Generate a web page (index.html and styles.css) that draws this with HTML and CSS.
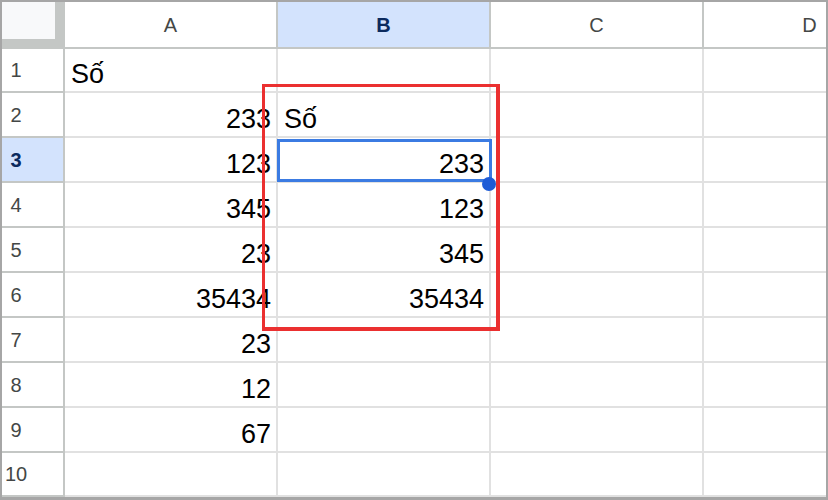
FILE: index.html
```html
<!DOCTYPE html>
<html lang="vi">
<head>
  <meta charset="UTF-8" />
  <title>Bảng tính</title>
  <link rel="stylesheet" href="styles.css">
</head>
<body>
  <div class="sheet">
    <div class="grid">
      <!-- En-tête des colonnes -->
      <div class="cell corner"></div>
      <div class="cell col-head">A</div>
      <div class="cell col-head active">B</div>
      <div class="cell col-head">C</div>
      <div class="cell col-head">D</div>

      <div class="cell row-head"><span>1</span></div>
      <div class="cell">Số</div>
      <div class="cell"></div>
      <div class="cell"></div>
      <div class="cell"></div>

      <div class="cell row-head"><span>2</span></div>
      <div class="cell num">233</div>
      <div class="cell">Số</div>
      <div class="cell"></div>
      <div class="cell"></div>

      <div class="cell row-head active"><span>3</span></div>
      <div class="cell num">123</div>
      <div class="cell num selected">233<i class="handle"></i></div>
      <div class="cell"></div>
      <div class="cell"></div>

      <div class="cell row-head"><span>4</span></div>
      <div class="cell num">345</div>
      <div class="cell num">123</div>
      <div class="cell"></div>
      <div class="cell"></div>

      <div class="cell row-head"><span>5</span></div>
      <div class="cell num">23</div>
      <div class="cell num">345</div>
      <div class="cell"></div>
      <div class="cell"></div>

      <div class="cell row-head"><span>6</span></div>
      <div class="cell num">35434</div>
      <div class="cell num">35434</div>
      <div class="cell"></div>
      <div class="cell"></div>

      <div class="cell row-head"><span>7</span></div>
      <div class="cell num">23</div>
      <div class="cell"></div>
      <div class="cell"></div>
      <div class="cell"></div>

      <div class="cell row-head"><span>8</span></div>
      <div class="cell num">12</div>
      <div class="cell"></div>
      <div class="cell"></div>
      <div class="cell"></div>

      <div class="cell row-head"><span>9</span></div>
      <div class="cell num">67</div>
      <div class="cell"></div>
      <div class="cell"></div>
      <div class="cell"></div>

      <div class="cell row-head"><span>10</span></div>
      <div class="cell"></div>
      <div class="cell"></div>
      <div class="cell"></div>
      <div class="cell"></div>
    </div>

    <!-- Cadre rouge autour de la plage B2:B6 -->
    <div class="highlight"></div>
  </div>
</body>
</html>
```

FILE: styles.css
```css
body {
  margin: 0;
  background: #fff;
}

.sheet {
  position: relative;
  width: 828px;
  height: 500px;
  box-sizing: border-box;
  border: 2px solid #a6a6a6;
  border-bottom-width: 3px;
  overflow: hidden;
  background: #fff;
}

.grid {
  display: grid;
  grid-template-columns: 63px repeat(4, 213px);
  grid-template-rows: 47px 44px repeat(8, 45px) 44px;
}

.cell {
  box-sizing: border-box;
  border-right: 2px solid #e1e1e1;
  border-bottom: 2px solid #e1e1e1;
  display: flex;
  align-items: flex-end;
  padding: 0 6px 2px;
  font-family: "Liberation Sans", Arial, "DejaVu Sans", sans-serif;
  font-size: 27px;
  line-height: 30px;
  color: #000;
  white-space: nowrap;
}

.num {
  justify-content: flex-end;
  padding-right: 5px;
}

/* En-têtes */
.corner {
  background: #f8f9fa;
  border-right: 10px solid #c4c7c5;
  border-bottom: 10px solid #c4c7c5;
  padding: 0;
}

.col-head {
  align-items: center;
  justify-content: center;
  padding: 0;
  font-size: 20px;
  color: #444746;
  border-right-color: #c4c7c5;
  border-bottom-color: #c4c7c5;
}

.row-head {
  align-items: center;
  padding: 0;
  font-size: 20px;
  color: #444746;
  border-right-color: #c4c7c5;
  border-bottom-color: #c4c7c5;
}

.row-head span {
  width: 28px;
  text-align: center;
}

.col-head.active,
.row-head.active {
  background: #d3e3fd;
  color: #0b2a5e;
  font-weight: bold;
}

/* Cellule sélectionnée */
.selected {
  position: relative;
}

.selected::before {
  content: "";
  position: absolute;
  left: -1px;
  top: 1px;
  right: -3px;
  bottom: -1px;
  border: 3px solid #3b7be2;
}

.handle {
  position: absolute;
  right: -7px;
  bottom: -10px;
  width: 14px;
  height: 14px;
  border-radius: 50%;
  background: #1d5bd6;
  z-index: 2;
}

/* Cadre rouge */
.highlight {
  position: absolute;
  left: 260px;
  top: 82px;
  width: 238px;
  height: 247px;
  box-sizing: border-box;
  border: 3px solid #eb3030;
  border-right-width: 4px;
  border-bottom-width: 4px;
  z-index: 3;
}
```
